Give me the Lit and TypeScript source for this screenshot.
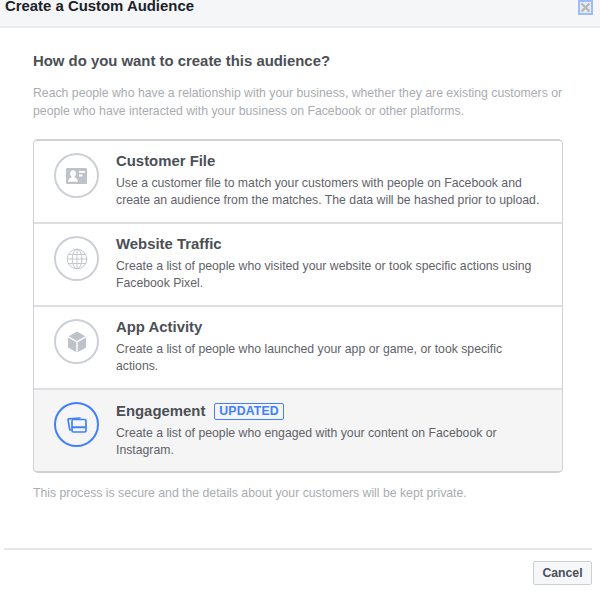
import { LitElement, html, css } from "lit";
import { customElement } from "lit/decorators.js";

const icons = {
  file: html`<svg viewBox="0 0 21 16" width="21" height="16"><path fill="#bec3c9" fill-rule="evenodd" d="M1.200 0h18.600A1.200 1.200 0 0 1 21 1.200v13.600a1.200 1.200 0 0 1-1.200 1.200H1.200A1.200 1.200 0 0 1 0 14.800V1.200A1.200 1.200 0 0 1 1.200 0zM7 2.300c-1.800 0-2.900 1.400-2.900 3.100 0 1.300.5 2.300 1.300 2.900v1.200C3.900 10 2.200 10.800 2 13.700h10c-.2-2.900-1.900-3.700-3.400-4.200V8.300c.8-.6 1.300-1.600 1.300-2.900 0-1.700-1.100-3.100-2.900-3.100zM13 3v1.800h6V3zm0 3.600v1.800h3.500V6.600z"/></svg>`,
  globe: html`<svg viewBox="0 0 22 22" width="22" height="22" fill="none" stroke="#c4c8ce" stroke-width="1"><circle cx="11" cy="11" r="9.800"/><ellipse cx="11" cy="11" rx="4.800" ry="9.800"/><path d="M11 1.200v19.600M1.200 11h19.600M2.500 6.500h17M2.500 15.500h17"/></svg>`,
  cube: html`<svg viewBox="0 0 20 22" width="20" height="22"><path fill="#bec3c9" d="M10 .5l8.300 4.700L10 10 1.700 5.200zM1 6.600l8.300 4.700v10L1 16.500zM19 6.600v9.900l-8.300 4.800v-10z"/></svg>`,
  stack: html`<svg viewBox="0 0 20 16" width="20" height="16" fill="none" stroke="#4080ff" stroke-width="1.700"><path d="M3.500 13 2.800 12.800 1 3A1.100 1.100 0 0 1 1.900 1.800L13 1" stroke-linecap="round"/><rect x="5" y="2.500" width="14" height="12.500" rx="1.400" fill="#f5f5f5"/><path d="M5 10.200h14" stroke-width="2"/></svg>`,
};

const rows = [
  { icon: icons.file, title: "Customer File", lines: ["Use a customer file to match your customers with people on Facebook and", "create an audience from the matches. The data will be hashed prior to upload."] },
  { icon: icons.globe, title: "Website Traffic", lines: ["Create a list of people who visited your website or took specific actions using", "Facebook Pixel."] },
  { icon: icons.cube, title: "App Activity", lines: ["Create a list of people who launched your app or game, or took specific", "actions."] },
  { icon: icons.stack, title: "Engagement", active: true, badge: "UPDATED", lines: ["Create a list of people who engaged with your content on Facebook or", "Instagram."] },
];

@customElement("app-root")
export class AppRoot extends LitElement {
  static styles = css`
    :host { display: block; width: 600px; height: 593px; overflow: hidden; background: #fff; font-family: "Liberation Sans", Arial, sans-serif; color: #4b4f56; }
    .header { height: 26px; background: #f5f6f7; border-bottom: 2px solid #e9ebee; display: flex; justify-content: space-between; align-items: flex-start; padding: 0 7px 0 5px; }
    .title { font-size: 14.900px; line-height: 13px; font-weight: 700; color: #1d2129; margin: 0; }
    .close { width: 11px; height: 11px; border: 2px solid #9cbcff; background: #e9ebee; display: flex; }
    .body { padding: 24px 37px 0 33px; }
    .h2 { margin: 0; font-size: 14.900px; line-height: 18px; font-weight: 700; color: #4b4f56; }
    .intro { margin: 14px 0 0; font-size: 12.250px; line-height: 18px; color: #a9acb1; white-space: nowrap; }
    .card { margin-top: 19px; border: 1px solid #d0d1d5; border-width: 2px 1px; border-radius: 5px; overflow: hidden; }
    .row { display: flex; height: 81px; background: #fff; }
    .row + .row { border-top: 2px solid #dddfe2; }
    .row.active { background: #f5f5f5; }
    .ring { flex: none; width: 41px; height: 41px; margin: 12px 0 0 20px; border: 2px solid #ccd0d5; border-radius: 50%; display: flex; align-items: center; justify-content: center; }
    .active .ring { border-color: #4080ff; }
    .text { margin-left: 17px; padding-top: 11px; }
    .name { display: flex; align-items: center; gap: 9px; font-size: 14.900px; line-height: 18px; font-weight: 700; color: #4b4f56; }
    .badge { font-size: 12.250px; line-height: 13px; font-weight: 700; letter-spacing: .15px; color: #4080ff; border: 1px solid #4080ff; border-radius: 2px; padding: 1px 4px; margin-top: 2px; }
    .desc { margin-top: 5px; font-size: 12.250px; line-height: 17px; color: #5f6369; white-space: nowrap; }
    .note { margin: 11px 0 0; font-size: 12.250px; line-height: 18px; color: #a9acb1; }
    .footer { margin: 46px 8px 0 4px; border-top: 2px solid #e5e6e9; padding-top: 11px; display: flex; justify-content: flex-end; }
    .btn { width: 59px; height: 24px; box-sizing: border-box; padding: 0; border: 1px solid #ccd0d5; border-radius: 2px; background: #f6f7f9; color: #4b4f56; font: 700 12.250px "Liberation Sans", Arial, sans-serif; }
  `;

  render() {
    return html`
      <div class="header">
        <h1 class="title">Create a Custom Audience</h1>
        <div class="close"><svg viewBox="0 0 11 11" width="11" height="11"><path d="M1.500 1.500l8 8M9.500 1.500l-8 8" stroke="#b4b8bf" stroke-width="2.400"/></svg></div>
      </div>
      <div class="body">
        <h2 class="h2">How do you want to create this audience?</h2>
        <p class="intro">Reach people who have a relationship with your business, whether they are existing customers or<br />people who have interacted with your business on Facebook or other platforms.</p>
        <div class="card">
          ${rows.map((r) => html`
            <div class="row ${r.active ? "active" : ""}">
              <div class="ring">${r.icon}</div>
              <div class="text">
                <div class="name">${r.title}${r.badge ? html`<span class="badge">${r.badge}</span>` : ""}</div>
                <div class="desc">${r.lines[0]}<br />${r.lines[1]}</div>
              </div>
            </div>`)}
        </div>
        <p class="note">This process is secure and the details about your customers will be kept private.</p>
      </div>
      <div class="footer"><button class="btn">Cancel</button></div>
    `;
  }
}
